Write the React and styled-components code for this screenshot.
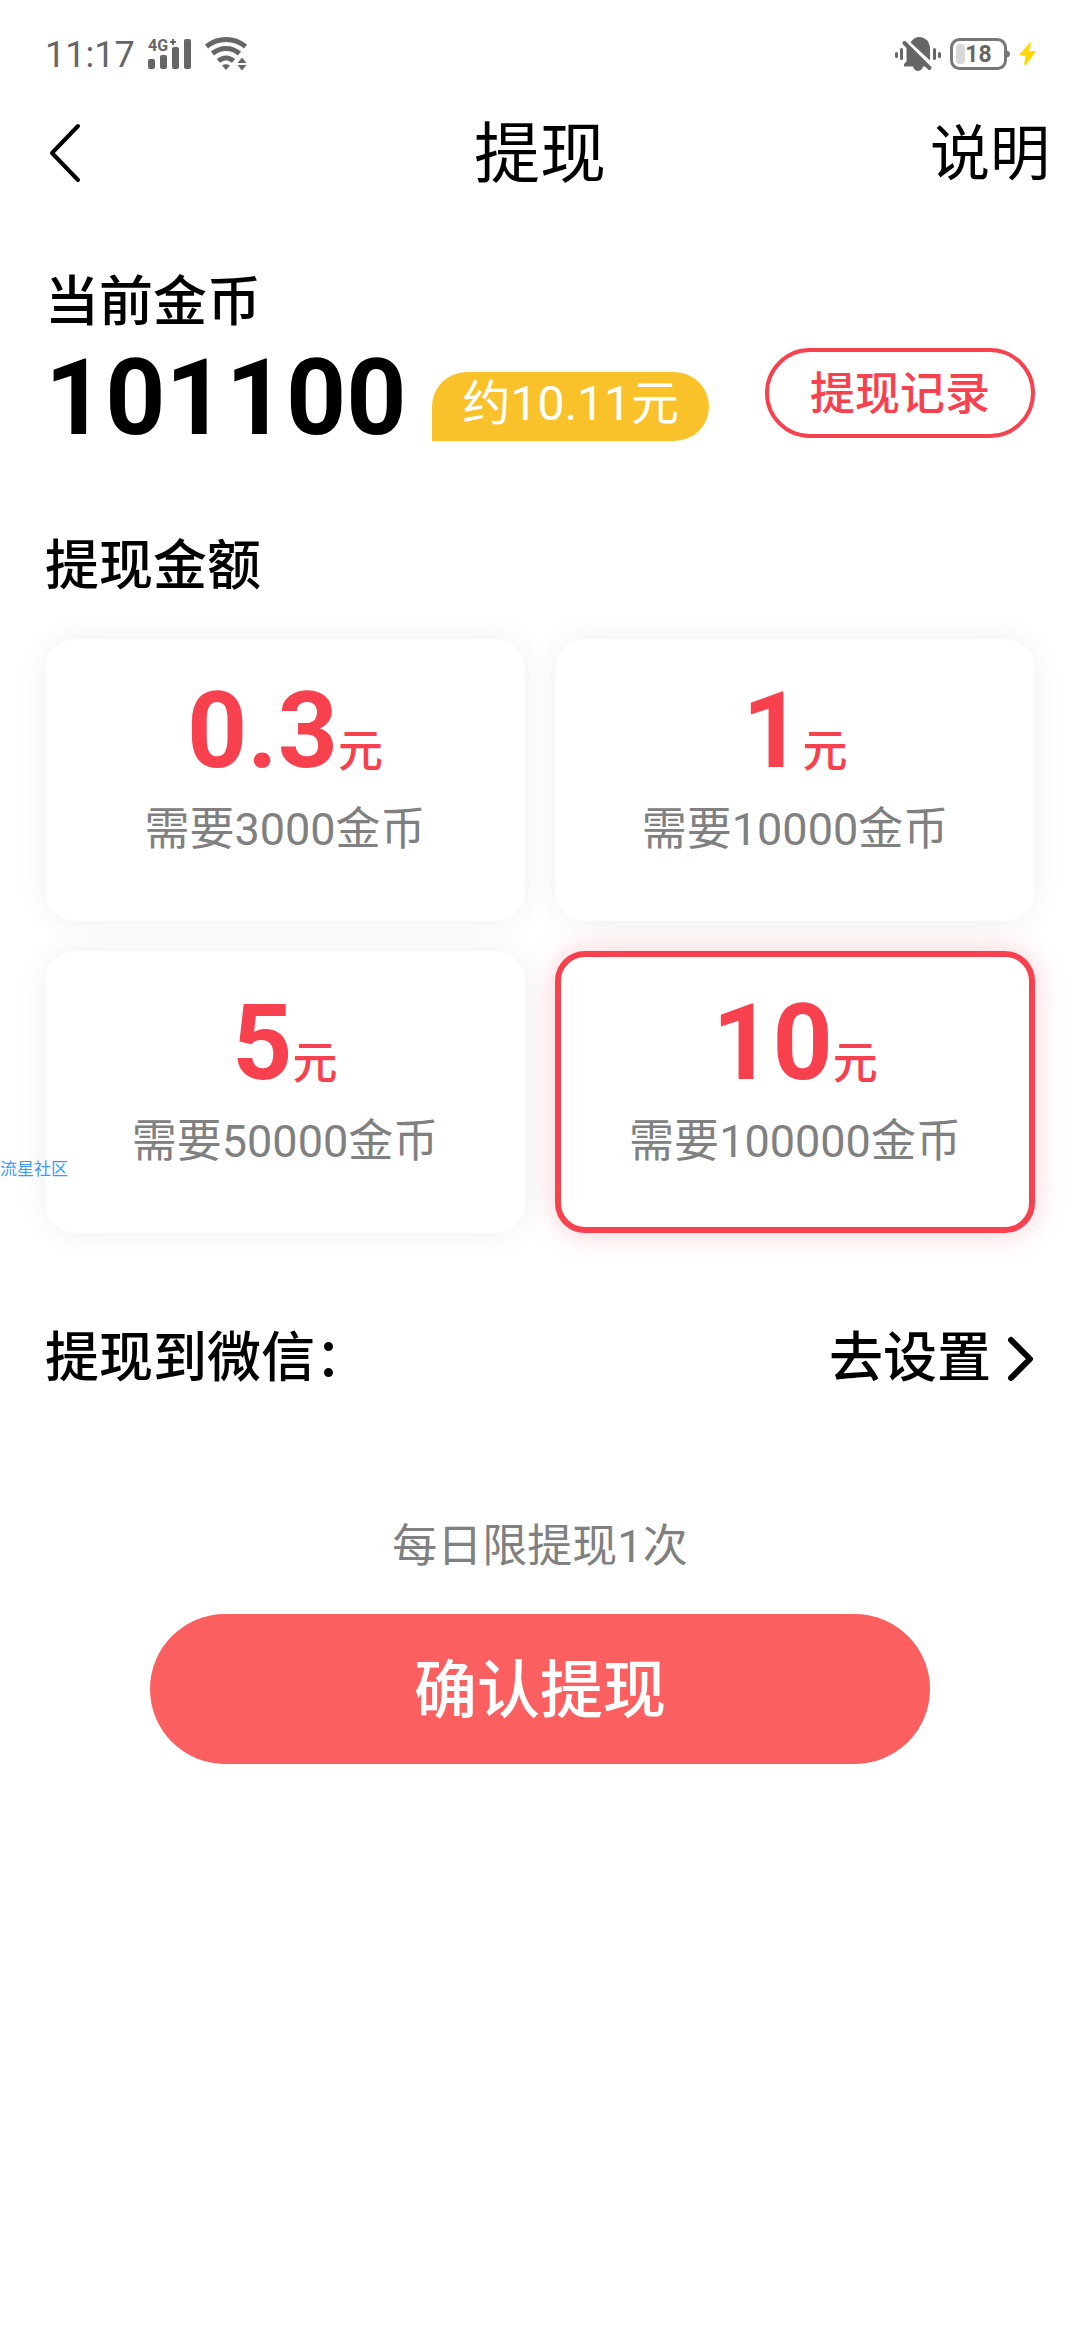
import React, { useState } from "react";
import styled, { createGlobalStyle } from "styled-components";


const GlobalStyle = createGlobalStyle`
    * {
        box-sizing: border-box;
    }
    body {
        margin: 0;
        background-color: #fff;
        color: #000;
        font-family: Roboto, "Noto Sans CJK SC", sans-serif;
    }
    button {
        padding: 0;
        border: none;
        background: none;
        color: inherit;
        font-family: inherit;
        cursor: pointer;
    }
`;

const StatusBar = styled.div`
    display: flex;
    align-items: center;
    justify-content: space-between;
    height: 108px;
    padding: 0 44px 0 45px;
    color: #666;
`;

const StatusGroup = styled.div`
    display: flex;
    align-items: center;
    gap: ${(props) => props.$gap}px;
`;

const Clock = styled.span`
    padding-top: 2px;
    font-size: 36px;
    line-height: 42px;
`;

const Header = styled.header`
    display: grid;
    grid-template-columns: 1fr auto 1fr;
    align-items: center;
    height: 90px;
    padding: 0 30px;
`;

const BackButton = styled.button`
    justify-self: start;
    display: flex;
    padding: 0 18px;
`;

const Title = styled.h1`
    margin: 0;
    padding-top: 4px;
    font-size: 66px;
    font-weight: 400;
    line-height: 86px;
`;

const HelpButton = styled.button`
    justify-self: end;
    padding-top: 4px;
    font-size: 60px;
    line-height: 86px;
`;

const Content = styled.main`
    padding: 68px 45px 0;
`;

const SectionTitle = styled.h2`
    margin: 0;
    padding-top: 2px;
    font-size: 54px;
    font-weight: 500;
    line-height: 70px;
`;

const BalanceRow = styled.div`
    display: flex;
    align-items: flex-start;
    margin-bottom: 72px;
`;

const Coins = styled.strong`
    padding-top: 2px;
    font-size: 105px;
    font-weight: 700;
    line-height: 118px;
`;

const CashBadge = styled.span`
    margin: 34px 0 0 26px;
    padding: 0 30px 6px;
    border-radius: 35px 35px 35px 0;
    background-color: #f9c22b;
    color: #fff;
    font-size: 48px;
    line-height: 63px;
`;

const RecordButton = styled.button`
    width: 270px;
    height: 90px;
    margin: 10px 0 0 auto;
    padding-top: 4px;
    border: 4px solid #f7414e;
    border-radius: 45px;
    color: #f7414e;
    font-size: 45px;
    font-weight: 500;
    line-height: 78px;
`;

const AmountGrid = styled.div`
    display: grid;
    grid-template-columns: 1fr 1fr;
    gap: 30px;
    margin-top: 37px;
`;

const AmountCard = styled.button`
    display: flex;
    flex-direction: column;
    align-items: center;
    gap: 12px;
    padding: 27px 0 59px;
    border: 6px solid ${(props) => (props.$active ? "#f7414e" : "#fff")};
    border-radius: 30px;
    background-color: #fff;
    box-shadow: 0 0 30px ${(props) => (props.$active ? "rgba(247, 65, 78, 0.25)" : "rgba(0, 0, 0, 0.07)")};
`;

const Amount = styled.span`
    color: #f7414e;
    font-size: 105px;
    font-weight: 700;
    line-height: 120px;
`;

const Unit = styled.span`
    font-size: 45px;
    font-weight: 500;
    line-height: 45px;
`;

const Cost = styled.span`
    color: #808080;
    font-size: 45px;
    line-height: 52px;
`;

const AccountRow = styled.div`
    display: flex;
    align-items: center;
    justify-content: space-between;
    margin: 89px 0 126px;
`;

const SetupButton = styled.button`
    display: flex;
    align-items: center;
    gap: 16px;
    padding-top: 2px;
    font-size: 54px;
    font-weight: 500;
    line-height: 70px;
`;

const Hint = styled.p`
    margin: 0 0 40px;
    color: #808080;
    font-size: 45px;
    line-height: 54px;
    text-align: center;
`;

const ConfirmButton = styled.button`
    display: block;
    width: calc(100% - 210px);
    height: 150px;
    margin: 0 auto;
    padding-top: 4px;
    border-radius: 75px;
    background-color: #fb5f60;
    color: #fff;
    font-size: 63px;
    font-weight: 500;
    line-height: 146px;
`;

const Watermark = styled.span`
    position: absolute;
    top: 1157px;
    left: 0;
    color: #3d9bf5;
    font-size: 17px;
    line-height: 24px;
`;


const SignalIcon = () => (
    <svg width="44" height="42" viewBox="0 -5 44 42" fill="currentColor">
        <text x="0" y="13" fontSize="16" fontWeight="700">4G</text>
        <path d="M24 1h2v2h2v2h-2v2h-2V5h-2V3h2z" />
        <rect x="0" y="21" width="7" height="10" rx="2" />
        <rect x="12" y="17" width="7" height="14" rx="2" />
        <rect x="24" y="9" width="7" height="22" rx="2" />
        <rect x="36" y="1" width="7" height="30" rx="2" />
    </svg>
);

const WifiIcon = () => (
    <svg width="42" height="34" viewBox="0 0 42 34" fill="none" stroke="currentColor" strokeWidth="5">
        <path d="M1.500 9.500C13 .2 29 .2 40.500 9.500" />
        <path d="M7.500 16.500C15.500 9.800 26.500 9.800 34.500 16.500" />
        <path d="M13.500 24C18 20 24 20 28.500 24" />
        <path d="M17 28.500Q21 26 25 28.500L21 33z" fill="currentColor" stroke="none" />
        <path d="M32.500 26L37 20.500L41.500 26zM32.500 28L37 33.500L41.500 28z" fill="currentColor" stroke="none" />
    </svg>
);

const MuteIcon = () => (
    <svg width="46" height="34" viewBox="0 0 46 34" fill="currentColor">
        <rect x="0" y="15" width="3" height="6" rx="1.500" />
        <rect x="5" y="11" width="3" height="12" rx="1.500" />
        <rect x="38" y="11" width="3" height="12" rx="1.500" />
        <rect x="43" y="15" width="3" height="6" rx="1.500" />
        <path d="M15.500 5.500C18 1.500 21 0 24 0C30.500 0 35 5 35 11.500V23.500z" />
        <path d="M11.500 9L31 29.500H28C27 33 24.500 34 23 34S19 33 18 29.500H10C8.500 29.500 8.500 27.500 9.500 26.500L11.500 24.500z" />
        <path d="M9.500 6L34.500 31" stroke="currentColor" strokeWidth="4" strokeLinecap="round" />
    </svg>
);

const BatteryIcon = () => (
    <svg width="60" height="32" viewBox="0 0 60 32">
        <rect x="1.500" y="1.500" width="54" height="29" rx="8" fill="none" stroke="#777" strokeWidth="3" />
        <path d="M57 12.500Q60 13 60 16T57 19.500z" fill="#777" />
        <rect x="6" y="6" width="9" height="20" rx="4" fill="#d8d8d8" />
        <text x="28.500" y="24" fontSize="23" fontWeight="700" fill="#666" textAnchor="middle">18</text>
    </svg>
);

const BoltIcon = () => (
    <svg width="17" height="24" viewBox="0 0 17 24" fill="#ffd900">
        <path d="M11 .5L.8 12Q0 13.500 1.500 13.500H6.500L5.200 22Q5.500 24 7 23L16.200 10.500Q17 9 15.500 9H10.500L12 1.500Q12 0 11 .5z" />
    </svg>
);

const BackIcon = () => (
    <svg width="33" height="60" viewBox="0 0 33 60" fill="none" stroke="#000" strokeWidth="4" strokeLinecap="round" strokeLinejoin="round">
        <path d="M30 3L4 30L30 57" />
    </svg>
);

const ArrowIcon = () => (
    <svg width="28" height="46" viewBox="0 0 28 46" fill="none" stroke="#000" strokeWidth="6" strokeLinecap="round" strokeLinejoin="round">
        <path d="M4 4L23 23L4 42" />
    </svg>
);


const options = [
    { value: "0.3", cost: 3000 },
    { value: "1", cost: 10000 },
    { value: "5", cost: 50000 },
    { value: "10", cost: 100000 },
];

const App = () => {

    const [selected, setSelected] = useState("10");

    return (
        <>
            <GlobalStyle />
            <StatusBar>
                <StatusGroup $gap={13}>
                    <Clock>11:17</Clock>
                    <SignalIcon />
                    <WifiIcon />
                </StatusGroup>
                <StatusGroup $gap={9}>
                    <MuteIcon />
                    <BatteryIcon />
                    <BoltIcon />
                </StatusGroup>
            </StatusBar>
            <Header>
                <BackButton type="button" aria-label="返回"><BackIcon /></BackButton>
                <Title>提现</Title>
                <HelpButton type="button">说明</HelpButton>
            </Header>
            <Content>
                <SectionTitle>当前金币</SectionTitle>
                <BalanceRow>
                    <Coins>101100</Coins>
                    <CashBadge>约10.11元</CashBadge>
                    <RecordButton type="button">提现记录</RecordButton>
                </BalanceRow>

                <SectionTitle>提现金额</SectionTitle>
                <AmountGrid>
                    {options.map((item) => (
                        <AmountCard
                            key={item.value}
                            type="button"
                            $active={item.value === selected}
                            aria-pressed={item.value === selected}
                            onClick={() => setSelected(item.value)}
                        >
                            <Amount>{item.value}<Unit>元</Unit></Amount>
                            <Cost>需要{item.cost}金币</Cost>
                        </AmountCard>
                    ))}
                </AmountGrid>

                <AccountRow>
                    <SectionTitle>提现到微信：</SectionTitle>
                    <SetupButton type="button">去设置<ArrowIcon /></SetupButton>
                </AccountRow>

                <Hint>每日限提现1次</Hint>
                <ConfirmButton type="button">确认提现</ConfirmButton>
            </Content>
            <Watermark>流星社区</Watermark>
        </>
    );

}

export default App;
